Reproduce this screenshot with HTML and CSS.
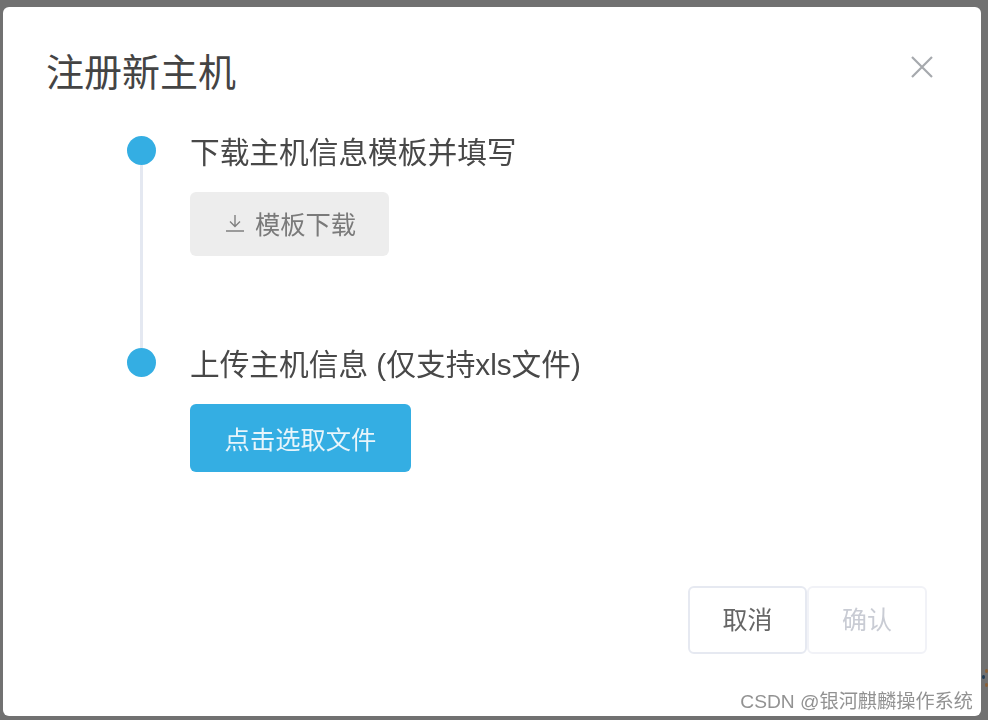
FILE: index.html
```html
<!DOCTYPE html>
<html lang="en">
<head>
  <meta charset="UTF-8">
  <meta name="viewport" content="width=device-width, initial-scale=1.0">
  <title>注册新主机</title>
  <link rel="stylesheet" href="styles.css">
</head>
<body>
  <div class="dialog">
    <div class="dialog-header">
      <div class="dialog-title">注册新主机</div>
      <svg class="close-icon" width="24" height="24" viewBox="0 0 24 24">
        <path d="M2 2 L22 22 M22 2 L2 22" stroke="#a6a9ad" stroke-width="2.2" fill="none"/>
      </svg>
    </div>
    <div class="steps">
      <div class="step step-first">
        <div class="step-mark">
          <div class="dot"></div>
          <div class="line"></div>
        </div>
        <div class="step-body">
          <div class="step-title">下载主机信息模板并填写</div>
          <button class="btn btn-download">
            <svg class="download-icon" width="20" height="20" viewBox="0 0 20 20">
              <path d="M10 2 V13 M5 8.5 L10 13.5 L15 8.5 M1 18 H19" stroke="#808080" stroke-width="1.4" fill="none"/>
            </svg>
            模板下载
          </button>
        </div>
      </div>
      <div class="step">
        <div class="step-mark">
          <div class="dot"></div>
        </div>
        <div class="step-body">
          <div class="step-title">上传主机信息 (仅支持xls文件)</div>
          <button class="btn btn-upload">点击选取文件</button>
        </div>
      </div>
    </div>
    <div class="dialog-footer">
      <button class="btn btn-cancel">取消</button>
      <button class="btn btn-confirm">确认</button>
    </div>
    <div class="watermark">CSDN @银河麒麟操作系统</div>
  </div>
  <div class="speck speck-a"></div>
  <div class="speck speck-b"></div>
  <div class="speck speck-c"></div>
</body>
</html>
```

FILE: styles.css
```css
html, body {
  height: 100%;
}
body {
  margin: 0;
  overflow: hidden;
  background-color: #717171;
  font-family: "Liberation Sans", "Noto Sans CJK SC", sans-serif;
  padding: 7px 7px 4px 3px;
  box-sizing: border-box;
}
.dialog {
  position: relative;
  height: 100%;
  background-color: #fff;
  border-radius: 6px;
  display: flex;
  flex-direction: column;
  filter: blur(0.4px);
}
.dialog-header {
  display: flex;
  justify-content: space-between;
  align-items: flex-start;
  padding: 43px 47px 0 43px;
}
.dialog-title {
  font-size: 38px;
  line-height: 46px;
  color: #444;
}
.close-icon {
  margin-top: 5px;
}
.steps {
  padding: 40px 0 0 124px;
}
.step {
  display: flex;
}
.step-first {
  height: 212px;
}
.step-mark {
  width: 29px;
  margin-right: 34px;
  display: flex;
  flex-direction: column;
  align-items: center;
}
.dot {
  width: 29px;
  height: 29px;
  border-radius: 50%;
  background-color: #34aee3;
  flex-shrink: 0;
}
.line {
  width: 3px;
  flex: 1;
  background-color: #e4e8f1;
}
.step-title {
  font-size: 29.7px;
  line-height: 32px;
  padding-top: 1px;
  color: #484848;
}
.btn {
  font-family: inherit;
  border-radius: 6px;
  border: none;
  display: flex;
  align-items: center;
  justify-content: center;
}
.btn-download {
  width: 199px;
  height: 64px;
  margin-top: 23px;
  padding: 0 0 2px 2px;
  font-size: 25.3px;
  color: #7a7a7a;
  background-color: #ededed;
  gap: 10px;
}
.btn-upload {
  width: 221px;
  height: 68px;
  margin-top: 23px;
  padding: 0 0 1px;
  font-size: 25.3px;
  color: #e8f5fb;
  background-color: #34aee3;
}
.dialog-footer {
  margin-top: auto;
  display: flex;
  justify-content: flex-end;
  padding: 0 54px 62px 0;
}
.btn-cancel, .btn-confirm {
  height: 68px;
  padding: 0 0 4px;
  font-size: 25px;
  background-color: #fff;
}
.btn-cancel {
  width: 119px;
  color: #666;
  border: 2px solid #e6e9f1;
}
.btn-confirm {
  width: 120px;
  color: #c9ccd4;
  border: 2px solid #f1f2f7;
}
.watermark {
  position: absolute;
  right: 8px;
  bottom: 2px;
  font-size: 19.2px;
  color: #929292;
}
.speck {
  position: absolute;
  width: 3px;
  height: 4px;
  border-radius: 50%;
  background-color: #8a5f35;
}
.speck-a { left: 985px; top: 669px; }
.speck-b { left: 982px; top: 675px; background-color: #1d3a55; }
.speck-c { left: 985px; top: 683px; }
```
